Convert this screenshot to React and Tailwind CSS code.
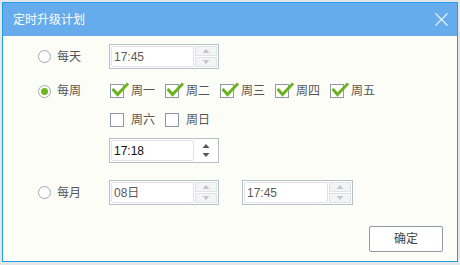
import React from "react";

const FONT = { fontFamily: '"Liberation Sans", "Noto Sans CJK SC", sans-serif' };

function Radio({ checked }) {
  return (
    <span className="w-[13px] h-[13px] rounded-full border border-[#9da8b2] bg-white flex items-center justify-center shrink-0">
      {checked && <span className="w-[7px] h-[7px] rounded-full bg-[#6cb61f]" />}
    </span>
  );
}

function Check({ checked, label }) {
  return (
    <div className="w-[55px] flex items-center shrink-0">
      <span className="relative w-[14px] h-[14px] border border-[#8c9aa7] bg-white shrink-0 ml-[1px]">
        {checked && (
          <svg className="absolute left-[1px] top-[-3px]" width="17" height="16" viewBox="0 0 17 16">
            <path d="M1.5 8 L5.5 12.5 L15 2.5" fill="none" stroke="#6cb21f" strokeWidth="3" strokeLinecap="square" />
          </svg>
        )}
      </span>
      <span className="ml-[7px] text-[12px] text-[#555] leading-none">{label}</span>
    </div>
  );
}

function Spinner({ value, active, className = "", w = 85, valueColor = "text-[#5f5a55]" }) {
  return (
    <div className={"h-[25px] border border-[#b7bfc7] bg-white flex p-[1px] gap-[1px] " + className}>
      <div
        className={"h-full border border-[#dfe3e7] rounded-[2px] bg-white flex items-center pl-[2px] text-[12px] " + valueColor}
        style={{ width: w }}
      >
        {value}
      </div>
      {active ? (
        <div className="w-[22px] h-full flex flex-col items-center justify-center gap-[5px]">
          <svg width="8" height="4" viewBox="0 0 8 4"><path d="M0.5 4 L4 0 L7.5 4 Z" fill="#555" /></svg>
          <svg width="8" height="4" viewBox="0 0 8 4"><path d="M0.5 0 L4 4 L7.5 0 Z" fill="#555" /></svg>
        </div>
      ) : (
        <div className="w-[22px] h-full flex flex-col gap-[1px]">
          <div className="flex-1 border border-[#dfe3e7] bg-[#f3f4f5] flex items-center justify-center">
            <svg width="8" height="4" viewBox="0 0 8 4"><path d="M0.5 4 L4 0 L7.5 4 Z" fill="#c3c7cb" /></svg>
          </div>
          <div className="flex-1 border border-[#dfe3e7] bg-[#f3f4f5] flex items-center justify-center">
            <svg width="8" height="4" viewBox="0 0 8 4"><path d="M0.5 0 L4 4 L7.5 0 Z" fill="#c3c7cb" /></svg>
          </div>
        </div>
      )}
    </div>
  );
}

function Label({ checked, text }) {
  return (
    <div className="w-[71px] flex items-center shrink-0 gap-[6px]">
      <Radio checked={checked} />
      <span className="text-[12px] text-[#555] leading-none">{text}</span>
    </div>
  );
}

export default function App() {
  return (
    <div className="w-[460px] h-[265px] bg-[#e4e6e8] overflow-hidden pt-[2px] pl-[2px]" style={FONT}>
      <div className="w-[456px] h-[260px] border border-[#1e9fe6] bg-[#fdfdf8] flex flex-col">
        <div className="h-[33px] bg-[#66abeb] flex items-center justify-between pl-[10px] pr-[9px] shrink-0">
          <span className="text-white text-[12px] leading-none">定时升级计划</span>
          <svg width="13" height="13" viewBox="0 0 13 13" className="mt-[-1px]">
            <path d="M0.5 0.5 L12.5 12.5 M12.5 0.5 L0.5 12.5" stroke="#eaf3fc" strokeWidth="1.2" />
          </svg>
        </div>
        <div className="flex flex-col pl-[35px] pr-[14px]">
          <div className="flex items-center mt-[8px]">
            <Label text="每天" />
            <Spinner value="17:45" className="w-[110px]" />
          </div>
          <div className="flex mt-[11px]">
            <div className="h-[22px] flex items-center">
              <Label checked text="每周" />
            </div>
            <div className="flex flex-col">
              <div className="h-[22px] flex items-center">
                <Check checked label="周一" />
                <Check checked label="周二" />
                <Check checked label="周三" />
                <Check checked label="周四" />
                <Check checked label="周五" />
              </div>
              <div className="h-[22px] flex items-center mt-[7px]">
                <Check label="周六" />
                <Check label="周日" />
              </div>
              <Spinner value="17:18" active className="w-[110px] mt-[7px]" valueColor="text-[#111]" />
            </div>
          </div>
          <div className="flex items-center mt-[17px]">
            <Label text="每月" />
            <Spinner value="08日" className="w-[110px]" />
            <Spinner value="17:45" className="w-[111px] ml-[23px]" />
          </div>
          <div className="flex justify-end mt-[21px]">
            <button className="w-[74px] h-[26px] border border-[#8e9ba6] rounded-[2px] bg-white text-[12px] text-[#444] flex items-center justify-center">
              确定
            </button>
          </div>
        </div>
      </div>
    </div>
  );
}
